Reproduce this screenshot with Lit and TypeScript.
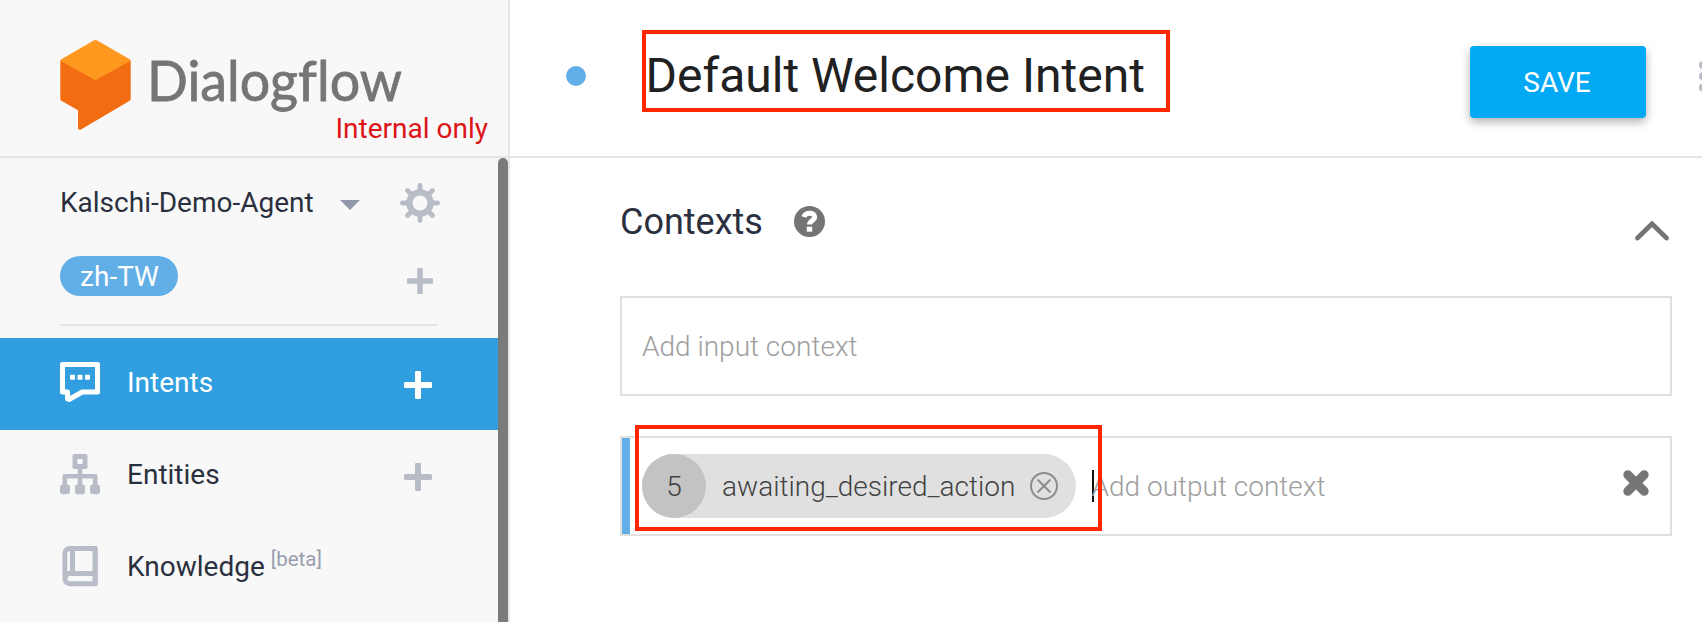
import { LitElement, html, css, svg } from "lit";
import { customElement, property } from "lit/decorators.js";

const plus = (size: number) => html`<svg width=${size} height=${size} viewBox="0 0 28 28" fill="currentColor">
  <rect x="0" y="11" width="28" height="6" rx="1.2"></rect>
  <rect x="11" y="0" width="6" height="28" rx="1.2"></rect>
</svg>`;

const glyphs: Record<string, unknown> = {
  intents: svg`<path fill="none" stroke="currentColor" stroke-width="5" stroke-linejoin="round"
      d="M2.5 2.5H37.5V30H22.3L9 37.500 7.500 37V30H2.500Z"/>
    <rect x="10" y="12.700" width="5" height="5" rx="1"/><rect x="17.500" y="12.700" width="5" height="5" rx="1"/>
    <rect x="25" y="12.700" width="5" height="5" rx="1"/>`,
  entities: svg`<path fill-rule="evenodd" d="M14.500 0h11a2 2 0 0 1 2 2v11a2 2 0 0 1-2 2h-11a2 2 0 0 1-2-2V2a2 2 0 0 1 2-2ZM17.500 5V10H22.500V5Z"/>
    <path fill="none" stroke="currentColor" stroke-width="4.600" stroke-linejoin="round" d="M20 14V33M4.800 33V22.300H35.200V33"/>
    <rect x="0" y="30.500" width="10" height="9.700" rx="2.400"/><rect x="15" y="30.500" width="10" height="9.700" rx="2.400"/>
    <rect x="30" y="30.500" width="10" height="9.700" rx="2.400"/>`,
  knowledge: svg`<path fill-rule="evenodd" d="M9.500 0H36a1.800 1.800 0 0 1 1.800 1.800V38.400A1.800 1.800 0 0 1 36 40.200H9.500A7 7 0 0 1 2.500 33V7A7 7 0 0 1 9.500 0ZM15 5V25H32.500V5ZM10 5C8.200 5.300 7.300 6.300 7.300 8V25H10ZM9.500 30C6.800 30.400 6.800 34.800 9.500 35.200H32.500V30Z"/>`,
};

@customElement("nav-item")
export class NavItem extends LitElement {
  @property() icon = "";
  @property() label = "";
  @property() note = "";
  @property({ type: Boolean }) addable = false;
  @property({ type: Boolean, reflect: true }) active = false;

  static styles = css`
    :host { display: flex; height: 92px; box-sizing: border-box; padding: 0 66px 0 60px; align-items: center; color: #b7bcc7; }
    :host([active]) { background: #319fdf; color: #fff; }
    .icon { display: block; margin-right: 27px; margin-top: -4px; }
    .label { flex: 1; color: #2b303f; line-height: 36px; padding-bottom: 3px; white-space: nowrap; }
    :host([active]) .label { color: #fff; }
    .note { font-size: 20.5px; color: #989eb0; vertical-align: 10px; line-height: 1; margin-left: 6px; }
    .add { display: flex; margin-top: 1px; }
  `;

  render() {
    return html`
      <svg class="icon" width="40" height="41" viewBox="0 0 40 41" fill="currentColor">${glyphs[this.icon]}</svg>
      <span class="label">${this.label}${this.note ? html`<span class="note">${this.note}</span>` : ""}</span>
      ${this.addable ? html`<span class="add">${plus(28)}</span>` : ""}
    `;
  }
}

@customElement("app-root")
export class AppRoot extends LitElement {
  static styles = css`
    :host {
      display: grid; grid-template: 158px 464px / 510px 1fr; position: relative;
      width: 100%; height: 622px; overflow: hidden; background: #fff;
      font: 400 28px/36px Roboto, "Liberation Sans", sans-serif; color: #2b303f;
    }
    * { box-sizing: border-box; }
    svg { display: block; flex: none; }
    .brand { background: #f8f8f8; border-right: 2px solid #e5e5e5; border-bottom: 2px solid #e5e5e5; padding: 38px 20px 0 58px; }
    .wordmark { font: 400 56px Lato, sans-serif; font-variant-ligatures: none; fill: #757575; stroke: #757575; stroke-width: .8px; }
    .internal { text-align: right; color: #dd1418; line-height: 36px; margin-top: -22px; }
    .side { background: #f8f8f8; border-right: 2px solid #e5e5e5; display: grid; grid-template-columns: 498px 10px; }
    .scroll { background: #7b7b7b; border-radius: 5px 5px 0 0; }
    .agent { display: flex; align-items: center; padding: 0 58px 0 60px; height: 89px; }
    .agent .name { flex: 1; }
    .caret { margin-right: 40px; margin-top: 5px; }
    .lang { display: flex; justify-content: space-between; align-items: flex-start; margin: 9px 60px 0; padding-right: 5px; height: 70px; border-bottom: 2px solid #e5e5e5; color: #b7bcc7; }
    .pill { height: 40px; width: 118px; border-radius: 20px; background: #62aee7; color: #fff; text-align: center; line-height: 41px; padding-left: 1px; }
    .lang svg { margin-top: 11.5px; }
    .menu { margin-top: 12px; }
    .head { display: flex; align-items: center; border-bottom: 2px solid #e5e5e5; padding-left: 56px; }
    .dot { width: 20px; height: 20px; border-radius: 50%; background: #62aee7; margin-bottom: 4px; }
    .title { font-size: 48px; line-height: 60px; color: #212121; margin-left: 59.5px; margin-bottom: 4px; flex: 1; white-space: nowrap; }
    .save { width: 176px; height: 72px; border-radius: 4px; background: #03a9f4; color: #fff; text-align: center; line-height: 73px; padding-right: 2px;
      margin-top: 8px; box-shadow: 0 4px 10px rgba(0,0,0,.26), 0 4px 8px rgba(0,0,0,.06); }
    .more { margin-left: 53px; width: 3px; overflow: hidden; color: #b7bcc7; margin-bottom: 4px; }
    .content { padding: 40px 30px 0 110px; }
    .section { display: flex; align-items: center; height: 46px; }
    .section h2 { font-size: 36px; font-weight: 400; line-height: 46px; margin: 2px 0 0; }
    .help { margin-left: 31px; }
    .up { margin-left: auto; margin-top: 20px; margin-right: 2px; }
    .field { height: 100px; border: 2px solid #e0e0e0; display: flex; align-items: center; font-weight: 300; color: #9e9e9e; margin-top: 40px; }
    .field.in { margin-top: 52px; padding-left: 20px; }
    .ph { padding-top: 1px; white-space: nowrap; }
    .bar { width: 8px; height: 96px; background: #62aee7; }
    .chip { display: flex; align-items: center; width: 434px; height: 64px; border-radius: 32px; background: #e0e0e0; color: #424242; margin-left: 12px; }
    .life { width: 64px; height: 64px; border-radius: 50%; background: #c3c3c3; text-align: center; line-height: 65px; }
    .ctx { margin-left: 16px; flex: 1; padding-top: 1px; white-space: nowrap; }
    .chip svg { margin-right: 18px; }
    .cursor { width: 2px; height: 32px; background: #111; margin-left: 16px; margin-right: -2.5px; }
    .clear { margin-left: auto; margin-right: 21px; margin-bottom: 6px; }
    .mark { position: absolute; border: 4px solid #ff2600; }
    .mark.a { left: 642px; top: 30px; width: 528px; height: 82px; }
    .mark.b { left: 635px; top: 425px; width: 467px; height: 106px; }
  `;

  render() {
    return html`
      <header class="brand">
        <svg width="360" height="95" viewBox="58 38 360 95">
          <path fill="#f26d12" d="M60.300 61Q60.300 59.500 62 59.500H129Q130.700 59.500 130.700 61V98.500Q130.700 100 129.300 101L81 129.500Q78 130.500 78 127.800V110.200L61.700 101Q60.300 100 60.300 98.500Z"/>
          <path fill="#ff981f" d="M61.300 59.200 93.800 40.400Q95.500 39.500 97.200 40.400L129.700 59.200Q130.700 60.200 129.700 61.200L95.500 80.200 61.300 61.200Q60.300 60.200 61.300 59.200Z"/>
          <text class="wordmark" x="147" y="101" textLength="255" lengthAdjust="spacingAndGlyphs">Dialogflow</text>
        </svg>
        <div class="internal">Internal only</div>
      </header>
      <div class="head">
        <span class="dot"></span>
        <span class="title">Default Welcome Intent</span>
        <span class="save">SAVE</span>
        <svg class="more" width="3" height="32" viewBox="0 0 3 32" fill="currentColor"><circle cx="4" cy="5" r="4"/><circle cx="4" cy="16.200" r="4"/><circle cx="4" cy="27.500" r="4"/></svg>
      </div>
      <aside class="side">
        <div>
          <div class="agent">
            <span class="name">Kalschi-Demo-Agent</span>
            <svg class="caret" width="20" height="10" viewBox="0 0 20 10"><path d="M0 0H20L10 10Z" fill="#9197aa"/></svg>
            <svg width="40" height="40" viewBox="-20 -20 40 40">
              <g stroke="#b7bcc7" stroke-width="4.800" stroke-linecap="round">
                <path d="M0-17.600V-12M0 17.600V12M-17.600 0H-12M17.600 0H12M-12.500-12.500-8-8M12.500-12.500 8-8M-12.500 12.500-8 8M12.500 12.500 8 8"/>
              </g>
              <circle r="10.600" fill="none" stroke="#b7bcc7" stroke-width="6.200"/>
            </svg>
          </div>
          <div class="lang"><span class="pill">zh-TW</span>${plus(26)}</div>
          <nav class="menu">
            <nav-item icon="intents" label="Intents" active addable></nav-item>
            <nav-item icon="entities" label="Entities" addable></nav-item>
            <nav-item icon="knowledge" label="Knowledge" note="[beta]"></nav-item>
          </nav>
        </div>
        <div class="scroll"></div>
      </aside>
      <main class="content">
        <div class="section">
          <h2>Contexts</h2>
          <svg class="help" width="31" height="31" viewBox="0 0 31 31">
            <circle cx="15.500" cy="15.500" r="15.500" fill="#757575"/>
            <path d="M9.800 11C11.500 6 20.300 6 20.600 10.900 20.800 14.400 15.500 14.400 15.500 18.600" fill="none" stroke="#fff" stroke-width="5"/>
            <rect x="12.800" y="20.700" width="5.400" height="5" fill="#fff"/>
          </svg>
          <svg class="up" width="36" height="22" viewBox="0 0 36 22"><path d="M3.500 18 18 3.800 32.500 18" fill="none" stroke="#757575" stroke-width="4.800" stroke-linecap="round"/></svg>
        </div>
        <div class="field in"><span class="ph">Add input context</span></div>
        <div class="field">
          <span class="bar"></span>
          <span class="chip">
            <span class="life">5</span><span class="ctx">awaiting_desired_action</span>
            <svg width="28" height="28" viewBox="0 0 28 28" fill="none" stroke="#8d8d8d" stroke-width="2"><circle cx="14" cy="14" r="13"/><path d="M7.500 7.500 20.500 20.500M20.500 7.500 7.500 20.500"/></svg>
          </span>
          <span class="cursor"></span>
          <span class="ph">Add output context</span>
          <svg class="clear" width="26" height="26" viewBox="0 0 26 26"><path d="M4.800 4.800 21.200 21.200M21.200 4.800 4.800 21.200" stroke="#757575" stroke-width="9" stroke-linecap="round"/></svg>
        </div>
      </main>
      <div class="mark a"></div>
      <div class="mark b"></div>
    `;
  }
}
